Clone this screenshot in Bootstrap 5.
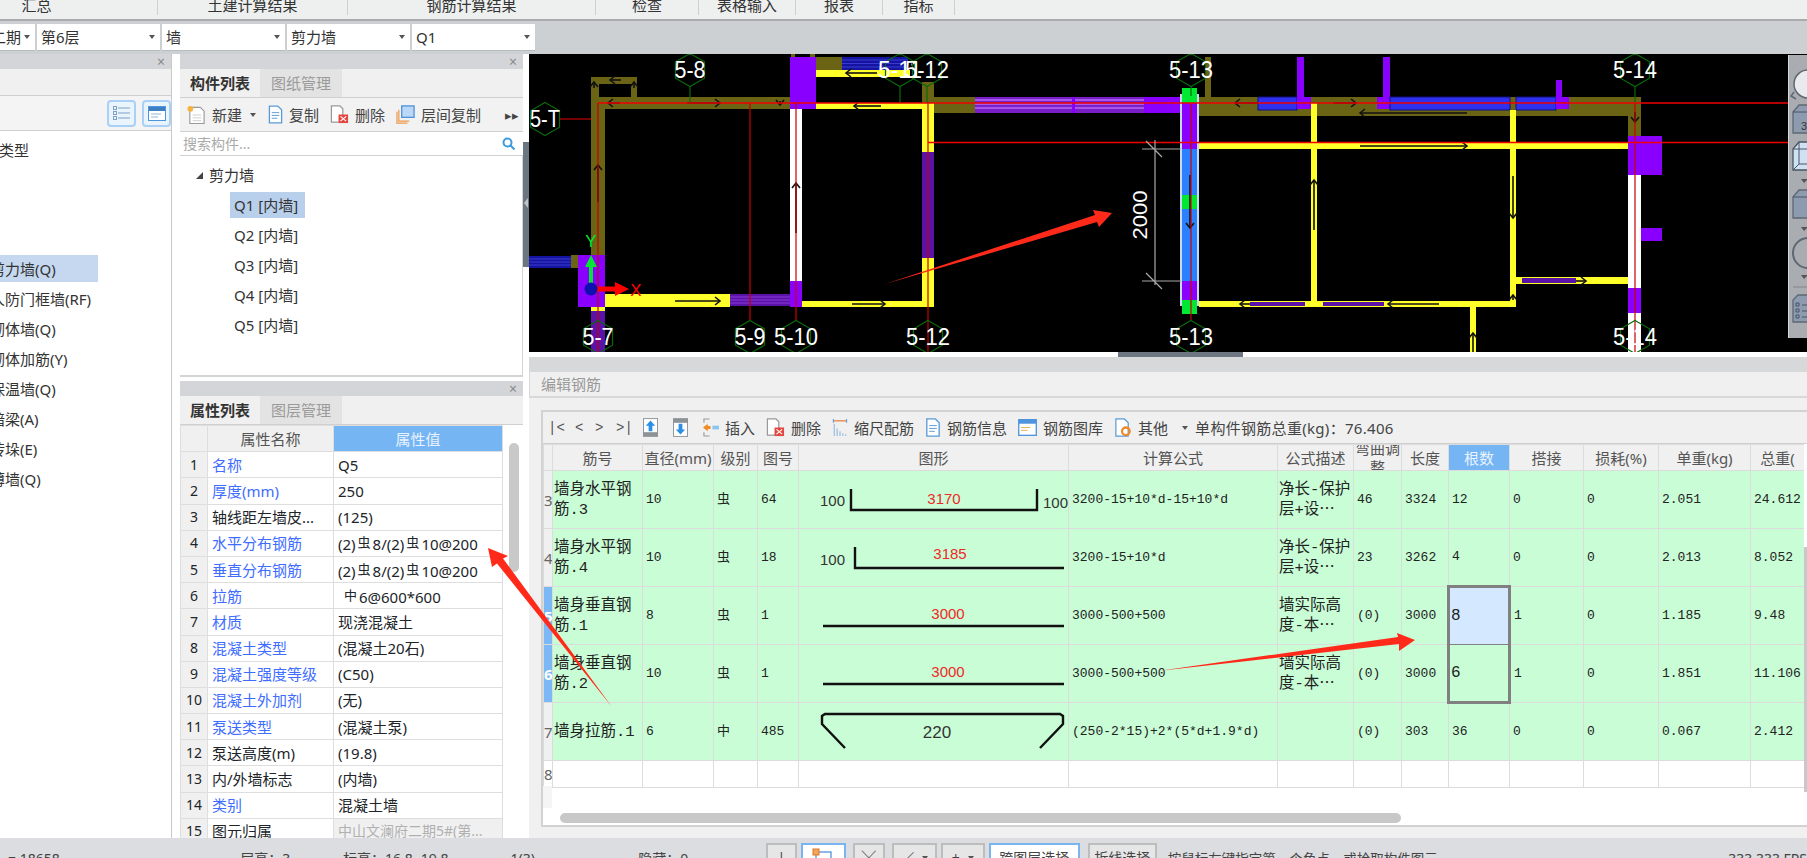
<!DOCTYPE html>
<html lang="zh-CN">
<head>
  <meta charset="UTF-8" />
  <meta name="viewport" content="width=device-width, initial-scale=1.0"/>
  <title>编辑钢筋</title>
  <link href="https://cdn.jsdelivr.net/npm/bootstrap@5.3.0/dist/css/bootstrap.min.css" rel="stylesheet"/>
  <style>
    html, body { height: 858px; overflow: hidden; }
    body {
      position: relative;
      width: 1807px;
      font: 15px/20px "Noto Sans", "Noto Sans CJK SC", sans-serif;
      color: #333;
      background: #dcdde0;
    }

    /* top strip */
    .ribbon {
      display: grid;
      grid-template-columns: 158px 190px 248px 103px 97px 87px 72px 1fr;
      height: 21px;
      background: #eef0f0;
      border-bottom: 2px solid #a9acaf;
      overflow: hidden;
      line-height: 11px;
      text-align: center;
    }
    .ribbon > div { border-right: 1px solid #ccd0d2; height: 15px; }
    .ribbon > div:first-child { padding-right: 84px; }
    .ribbon > div:last-child { border: 0; }

    .combos { display: flex; gap: 2px; height: 33px; padding: 3px 0 3px; background: #cdd0d3; }
    .combo {
      display: flex; align-items: center; justify-content: space-between; flex: none;
      width: 123px; height: 27px; padding: 0 5px 0 4px; background: #fff; border-bottom: 1px solid #b9bcbf;
      white-space: nowrap;
    }
    .combo::after, .drop-mark {
      content: ""; display: inline-block; flex: none;
      border-left: 3.5px solid transparent; border-right: 3.5px solid transparent; border-top: 4px solid #555;
    }
    .combo-first { width: 35px; overflow: hidden; padding-left: 0; justify-content: flex-end; gap: 3px; }

    .workspace { display: flex; height: 784px; }
    .col-types { width: 180px; background: #fff; flex: none; overflow: hidden; }
    .col-mid { width: 343px; flex: none; display: flex; flex-direction: column; background: #fff; }
    .col-strip { width: 6px; flex: none; background: #fff; padding-top: 88px; }
    .strip-handle { height: 125px; background: #6b7682; position: relative; }
    .strip-handle::after {
      content: ""; position: absolute; left: 1px; top: 56px;
      border-right: 4px solid #bfc4c9; border-top: 5px solid transparent; border-bottom: 5px solid transparent;
    }
    .col-main { flex: 1; min-width: 0; display: flex; flex-direction: column; background: #f0f0f0; }

    .pane-head {
      height: 15px; background: #d3d5d9; text-align: right;
      padding-right: 6px; font-size: 14px; line-height: 15px; color: #8a8a8a;
    }
    .types-wrap { width: 172px; height: 100%; border-right: 1px solid #c9c9c9; }
    .types-strip { height: 27px; background: #f0f0f0; border-bottom: 1px solid #cfcfcf; }
    .types-bar { height: 35px; display: flex; justify-content: flex-end; align-items: center; gap: 6px; border-bottom: 1px solid #cfcfcf; background: #f4f4f4; }
    .view-btn { width: 29px; height: 27px; padding: 0; border: 2px solid #a9d1f7; border-radius: 4px; background: #eaf4fd; display: flex; align-items: center; justify-content: center; }
    .type-item { height: 30px; line-height: 30px; margin-left: -10px; white-space: nowrap; }
    .type-on { background: #c5d8f0; width: 108px; height: 27px; margin-bottom: 2px; line-height: 28px; }
    .type-group { margin: 4px 0 90px -31px; height: 30px; line-height: 30px; white-space: nowrap; }

    .tabs-row { display: flex; height: 29px; background: #f0f0f0; border-bottom: 1px solid #d0d0d0; }
    .pane-tab { width: 80px; height: 28px; line-height: 28px; text-align: center; font-weight: 700; color: #333; }
    .pane-tab-off { width: 82px; background: #e3e3e3; color: #9a9a9a; font-weight: 400; }

    .tools { display: flex; align-items: center; height: 34px; background: #f2f2f2; border-bottom: 1px solid #d0d0d0; padding-left: 7px; color: #444; white-space: nowrap; }
    .tool { display: flex; align-items: center; gap: 6px; }
    .tool-gap { margin-left: 11px; }
    .search-row { display: flex; justify-content: space-between; align-items: center; height: 24px; padding: 0 8px 0 3px; border-bottom: 1px solid #d0d0d0; color: #aaa; font-size: 14px; }
    .tree-box { height: 221px; border-bottom: 2px solid #d4d4d4; border-right: 1px solid #d4d4d4; padding: 8px 0 0 16px; color: #333; }
    .tree-head { display: flex; align-items: center; gap: 6px; height: 22px; }
    .tree-head i { display: block; border-left: 7px solid transparent; border-bottom: 7px solid #444; }
    .tree-leaf { height: 30px; line-height: 26px; margin-left: 34px; padding: 0 4px; width: 75px; white-space: nowrap; }
    .tree-on { background: #b9d0ec; height: 26px; margin-top: 6px; margin-bottom: 4px; }

    .pane-props { flex: 1; min-height: 0; overflow: hidden; background: #fff; margin-top: 4px; position: relative; }
    .props-table { width: 322px; table-layout: fixed; margin: 0; border-collapse: collapse; vertical-align: middle; --bs-table-bg: transparent; }
    .props-table thead { vertical-align: middle; }
    .props-table td, .props-table th { height: 26.2px; padding: 0 4px; border: 1px solid #dedede; line-height: 20px; font-weight: 400; white-space: nowrap; overflow: hidden; vertical-align: middle; }
    .props-table th { background: #f0f0f0; text-align: center; color: #555; }
    .props-table .prop-head { background: #76b5f4; color: #e8f3ff; }
    .props-table .row-no { background: #f0f0f0; text-align: center; font-size: 14px; }
    .blue-key { color: #3e6dff; }
    .rb { font-size: 13px; vertical-align: 3px; padding: 0 2px; }
    .muted-val { background: #f0f0f0 !important; color: #b0b0b0; font-size: 14px; }
    .props-thumb { position: absolute; left: 329px; top: 62px; width: 10px; height: 129px; border-radius: 5px; background: #c9c9c9; }

    .cad { display: block; flex: none; }
    .cad text { font-family: "Liberation Sans", sans-serif; fill: #fff; }
    .c-ol { fill: #6b6414; } .c-ye { fill: #ffff2a; } .c-pu { fill: #8a00ff; } .c-dp { fill: #5a12a8; }
    .c-bl { fill: #2f2ff0; } .c-nv { fill: #1414a0; } .c-wh { fill: #fff; } .c-gr { fill: #00e832; } .c-sk { fill: #2a80ff; } .c-lp { fill: #7a1ec8; }
    .red-h { stroke: #f00000; stroke-width: 1.4; }
    .red-v { stroke: #c80000; stroke-width: 1.2; }
    .grn-v { stroke: #0a6a0a; stroke-width: 1.2; }
    .wall-a { stroke: #111; stroke-width: 1.6; fill: none; marker-end: url(#tip); }
    .pal-box { fill: #8c9bb0; stroke: #5f6872; stroke-width: 1.3; }
    .pal-line { fill: none; stroke: #4a5560; }
    .pal-tri { fill: #555; }

    .cad-scroll { height: 5px; flex: none; background: #fff; padding-left: 589px; }
    .cad-scroll div { width: 125px; height: 5px; background: #6e7781; }
    .gap-gray { height: 15px; flex: none; background: #d7d8da; }
    .edit-head { height: 26px; flex: none; line-height: 25px; padding-left: 11px; color: #999; background: #f0f0f0; border-bottom: 2px solid #d8d8d8; border-left: 1px solid #d8d8d8; }
    .edit-box { flex: none; height: 417px; margin: 12px 0 11px 12px; background: #fff; border: 1px solid #d2d2d2; border-width: 2px 0 2px 2px; display: flex; flex-direction: column; position: relative; }
    .edit-tools { display: flex; align-items: center; height: 32px; flex: none; padding-left: 5px; background: #f0f0f0; border-bottom: 1px solid #d0d0d0; color: #444; white-space: nowrap; }
    .edit-tools .tool { margin-right: 11px; }
    .edit-tools .tool-end { margin-right: 7px; }
    .total-text { letter-spacing: .3px; }
    .nav-mark { font-family: "Liberation Mono", monospace; color: #555; font-size: 14px; width: 21px; }
    .nav-first { width: 27px; }
    .nav-second { width: 20px; }
    .nav-last { width: 27px; }
    .steel-wrap { flex: 1; min-height: 0; overflow: hidden; width: 1261px; position: relative; }
    .steel-table { width: 1261px; table-layout: fixed; border-collapse: collapse; margin: 0; vertical-align: middle; --bs-table-bg: transparent; }
    .steel-table thead { vertical-align: middle; }
    .steel-table td, .steel-table th { border: 1px solid #dcdcdc; padding: 0 3px; overflow: hidden; font-weight: 400; vertical-align: middle; }
    .steel-table th { height: 26px; background: #f0f0f0; text-align: center; color: #555; line-height: 20px; white-space: nowrap; }
    .steel-table .wrap-head { white-space: normal; padding: 0; line-height: 19px; }
    .wrap-head div { height: 25px; display: flex; align-items: center; overflow: hidden; }
    .steel-table .sel-head { background: #76b5f4; color: #e8f3ff; }
    .steel-table tbody tr { height: 57.5px; }
    .steel-table tbody td { background: #c9fdd6; font: 13px/22px "Liberation Mono", "Noto Sans CJK SC", monospace; color: #222; }
    .steel-table tbody td.row-n { background: #f0f0f0; color: #666; padding: 0; text-align: center; font: 15px/20px "Noto Sans", sans-serif; }
    .steel-table tbody td.row-n-on { background: #7db8f6; color: #fff; font-weight: 700; }
    .steel-table tbody td.txt-cell { font-size: 15.5px; line-height: 20px; padding-left: 1px; padding-right: 0; }
    .steel-table tbody td.fig-cell { padding: 0; }
    .steel-table tbody td.sel-top { background: #d4e8ff; border: 3px solid #808080; border-bottom-width: 1px; font-size: 16px; padding-left: 1px; }
    .steel-table tbody td.sel-bot { border: 3px solid #808080; border-top-width: 1px; font-size: 16px; padding-left: 1px; }
    .steel-table tbody tr.blank-row { height: 27px; }
    .steel-table tbody tr.blank-row td { background: #fff; }
    .fig { display: block; }
    .fig text { font: 15px "Liberation Sans Narrow", "Liberation Sans", sans-serif; fill: #333; }
    .fig .num-red { fill: #f02828; }
    .fig-line { fill: none; stroke: #111; stroke-width: 2.4; }
    .row-tail { position: absolute; left: 0; top: 374px; width: 9px; height: 22px; background: #f5f5f5; }
    .hbar { position: absolute; left: 17px; top: 401px; width: 841px; height: 10px; border-radius: 5px; background: #c8c8c8; }
    .vbar { position: absolute; right: 0; top: 135px; width: 3px; height: 245px; background: #c8c8c8; }

    .status {
      display: flex; height: 20px; background: #dcdde0; overflow: hidden; white-space: nowrap; font-size: 14px; color: #444;
    }
    .status > span { padding-top: 11px; }
    .st-0 { width: 241px; padding-left: 8px; }
    .st-1 { width: 103px; } .st-2 { width: 168px; } .st-3 { width: 128px; } .st-4 { width: 128px; }
    .st-btns { display: flex; gap: 4px; padding-top: 5px; }
    .st-btn {
      height: 28px; padding: 3px 0 0; border: 2px solid #bdbdbd; border-radius: 0; background: #e6e6e6; color: #444;
      font-size: 14px; line-height: 20px; text-align: center; display: flex; justify-content: center; gap: 8px; white-space: nowrap;
    }
    .st-on { border-color: #7ab5f2; background: #fff; }
    .st-far { margin-left: 3px; }
    .st-msg { padding-left: 11px; width: 573px; font-size: 13.5px; }
  </style>
</head>
<body>

  <svg width="0" height="0" class="d-block position-absolute">
    <defs>
      <symbol id="i-page" viewBox="0 0 16 20"><path d="M1.5 1h9l4 4v14h-13z" fill="#fff" stroke="#5b9bd5" stroke-width="1.4"/><path d="M4 8h8M4 11h8M4 14h6" stroke="#5b9bd5"/></symbol>
      <symbol id="i-del" viewBox="0 0 20 20"><path d="M1.5 1h9l3 3v14h-12z" fill="#fff" stroke="#999" stroke-width="1.3"/><rect x="9" y="10" width="10" height="9" fill="#e4453f"/><path d="M11 12l6 5M17 12l-6 5" stroke="#fff" stroke-width="1.2"/></symbol>
      <symbol id="i-new" viewBox="0 0 20 20"><path d="M3 2h11l4 4v13H3z" fill="#fff" stroke="#999" stroke-width="1.2"/><path d="M6 10h9M6 13h9M6 16h9" stroke="#ccc"/><circle cx="3.5" cy="3.5" r="3" fill="#f7b23b"/></symbol>
      <symbol id="i-layers" viewBox="0 0 20 20"><path d="M1 7v12h11M3 5v12h11" fill="none" stroke="#ee9a4d" stroke-width="1.3"/><rect x="6" y="1" width="13" height="12" fill="#bcd8f6" stroke="#4f94dc" stroke-width="1.4"/></symbol>
      <symbol id="i-up" viewBox="0 0 16 20"><rect width="16" height="20" fill="#8d9297"/><rect x="1" y="1" width="14" height="14" fill="#fff"/><path d="M8 2.5l5 5.5h-3v6H6V8H3z" fill="#2b8fe6"/></symbol>
      <symbol id="i-down" viewBox="0 0 16 20"><rect width="16" height="20" fill="#8d9297"/><rect x="1" y="5" width="14" height="14" fill="#fff"/><path d="M8 17.5l5-5.5h-3V6H6v6H3z" fill="#2b8fe6"/></symbol>
      <symbol id="i-ins" viewBox="0 0 17 20"><path d="M7 1H1v4M7 19H1v-4" fill="none" stroke="#999" stroke-width="1.2"/><path d="M0 10l5-4v2.500h3v3H5V14z" fill="#f08a24"/><rect x="10" y="8" width="7" height="4" fill="#8cc4f2"/></symbol>
      <symbol id="i-scale" viewBox="0 0 16 20"><path d="M1 3h14" stroke="#e8762c" stroke-width="1.2"/><path d="M1 1v4M15 1v4" stroke="#4f94dc"/><path d="M2 19V6M5 19v-8M8 19v-5M11 19v-3M14 19v-2" stroke="#9bbfe0" stroke-width="1.3"/></symbol>
      <symbol id="i-lib" viewBox="0 0 20 18"><rect x=".7" y=".7" width="18.6" height="16.6" fill="#fff" stroke="#4f94dc" stroke-width="1.4"/><rect x="1" y="1" width="18" height="4" fill="#4f94dc"/><path d="M3 9h10M3 12h7" stroke="#e3b04b"/></symbol>
      <symbol id="i-other" viewBox="0 0 18 20"><path d="M1.5 1h9l4 4v14h-13z" fill="#fff" stroke="#5b9bd5" stroke-width="1.3"/><circle cx="12" cy="14" r="4" fill="none" stroke="#ee8a2a" stroke-width="2.4"/></symbol>
    </defs>
  </svg>

  <div class="ribbon">
    <div>汇总</div><div>土建计算结果</div><div>钢筋计算结果</div><div>检查</div><div>表格输入</div><div>报表</div><div>指标</div><div></div>
  </div>

  <div class="combos">
    <div class="combo combo-first">二期</div>
    <div class="combo">第6层</div>
    <div class="combo">墙</div>
    <div class="combo">剪力墙</div>
    <div class="combo">Q1</div>
  </div>

  <div class="workspace">
    <!-- left: component types, the panel is cut by the window edge -->
    <div class="col-types">
      <div class="types-wrap">
        <div class="pane-head">×</div>
        <div class="types-strip"></div>
        <div class="types-bar">
          <button class="btn view-btn" type="button">
            <svg width="17" height="15" viewBox="0 0 17 15"><path d="M5 2h12M5 7h12M5 12h12" stroke="#7d9fc4"/><rect x=".5" y=".5" width="3" height="3" fill="none" stroke="#7d9fc4"/><rect x=".5" y="5.500" width="3" height="3" fill="none" stroke="#7d9fc4"/><rect x=".5" y="10.500" width="3" height="3" fill="none" stroke="#7d9fc4"/></svg>
          </button>
          <button class="btn view-btn" type="button">
            <svg width="18" height="15" viewBox="0 0 18 15"><rect x=".5" y=".5" width="17" height="14" fill="#fff" stroke="#4f94dc"/><rect x="1" y="1" width="16" height="4" fill="#3e7fc4"/><path d="M3 8h10M3 11h7" stroke="#8cb6e0"/></svg>
          </button>
        </div>
        <div class="type-group">构件类型</div>
        <div class="type-item type-on">剪力墙(Q)</div>
        <div class="type-item">人防门框墙(RF)</div>
        <div class="type-item">砌体墙(Q)</div>
        <div class="type-item">砌体加筋(Y)</div>
        <div class="type-item">保温墙(Q)</div>
        <div class="type-item">暗梁(A)</div>
        <div class="type-item">砖垛(E)</div>
        <div class="type-item">薄墙(Q)</div>
      </div>
    </div>

    <!-- middle: component list + properties -->
    <div class="col-mid">
      <div class="pane-head">×</div>
      <div class="tabs-row">
        <div class="pane-tab">构件列表</div>
        <div class="pane-tab pane-tab-off">图纸管理</div>
      </div>
      <div class="tools">
        <div class="tool"><svg width="19" height="20"><use href="#i-new"/></svg>新建</div>
        <span class="drop-mark ms-2 me-2"></span>
        <div class="tool ms-1"><svg width="15" height="19"><use href="#i-page"/></svg>复制</div>
        <div class="tool tool-gap"><svg width="19" height="19"><use href="#i-del"/></svg>删除</div>
        <div class="tool tool-gap"><svg width="19" height="19"><use href="#i-layers"/></svg>层间复制</div>
        <span class="ms-auto me-1 small">▸▸</span>
      </div>
      <div class="search-row">
        <span>搜索构件...</span>
        <svg width="13" height="13" viewBox="0 0 13 13"><circle cx="5.500" cy="5.500" r="4" fill="none" stroke="#3b9bdc" stroke-width="2"/><path d="M8.500 8.500l4 4" stroke="#3b9bdc" stroke-width="2"/></svg>
      </div>
      <div class="tree-box">
        <div class="tree-head"><i></i>剪力墙</div>
        <div class="tree-leaf tree-on">Q1 [内墙]</div>
        <div class="tree-leaf">Q2 [内墙]</div>
        <div class="tree-leaf">Q3 [内墙]</div>
        <div class="tree-leaf">Q4 [内墙]</div>
        <div class="tree-leaf">Q5 [内墙]</div>
      </div>

      <div class="pane-props">
        <div class="pane-head">×</div>
        <div class="tabs-row">
          <div class="pane-tab">属性列表</div>
          <div class="pane-tab pane-tab-off">图层管理</div>
        </div>
        <table class="table props-table">
          <colgroup><col style="width:27px"><col style="width:126px"><col style="width:169px"></colgroup>
          <thead><tr><th></th><th>属性名称</th><th class="prop-head">属性值</th></tr></thead>
          <tbody>
            <tr><td class="row-no">1</td><td class="blue-key">名称</td><td>Q5</td></tr>
            <tr><td class="row-no">2</td><td class="blue-key">厚度(mm)</td><td>250</td></tr>
            <tr><td class="row-no">3</td><td>轴线距左墙皮...</td><td>(125)</td></tr>
            <tr><td class="row-no">4</td><td class="blue-key">水平分布钢筋</td><td>(2)<span class="rb">虫</span>8/(2)<span class="rb">虫</span>10@200</td></tr>
            <tr><td class="row-no">5</td><td class="blue-key">垂直分布钢筋</td><td>(2)<span class="rb">虫</span>8/(2)<span class="rb">虫</span>10@200</td></tr>
            <tr><td class="row-no">6</td><td class="blue-key">拉筋</td><td>&nbsp;<span class="rb">中</span>6@600*600</td></tr>
            <tr><td class="row-no">7</td><td class="blue-key">材质</td><td>现浇混凝土</td></tr>
            <tr><td class="row-no">8</td><td class="blue-key">混凝土类型</td><td>(混凝土20石)</td></tr>
            <tr><td class="row-no">9</td><td class="blue-key">混凝土强度等级</td><td>(C50)</td></tr>
            <tr><td class="row-no">10</td><td class="blue-key">混凝土外加剂</td><td>(无)</td></tr>
            <tr><td class="row-no">11</td><td class="blue-key">泵送类型</td><td>(混凝土泵)</td></tr>
            <tr><td class="row-no">12</td><td>泵送高度(m)</td><td>(19.8)</td></tr>
            <tr><td class="row-no">13</td><td>内/外墙标志</td><td>(内墙)</td></tr>
            <tr><td class="row-no">14</td><td class="blue-key">类别</td><td>混凝土墙</td></tr>
            <tr><td class="row-no">15</td><td>图元归属</td><td class="muted-val">中山文澜府二期5#(第...</td></tr>
          </tbody>
        </table>
        <div class="props-thumb"></div>
      </div>
    </div>

    <div class="col-strip"><div class="strip-handle"></div></div>

    <!-- right: drawing on top, rebar editor below -->
    <div class="col-main">
      <svg class="cad" width="1278" height="298" viewBox="529 54 1278 298">
        <defs>
          <marker id="tip" markerWidth="8" markerHeight="10" refX="6" refY="5" orient="auto" markerUnits="userSpaceOnUse">
            <path d="M1 1l5 4-5 4" fill="none" stroke="#111" stroke-width="1.6"/>
          </marker>
          <polygon id="hex" points="0,-16.5 14.5,-8.2 14.5,8.2 0,16.5 -14.5,8.2 -14.5,-8.2" fill="none" stroke="#0a6a0a" stroke-width="1.2"/>
        </defs>
        <rect x="529" y="54" width="1278" height="298" fill="#000"/>

        <!-- olive walls, left room -->
        <path class="c-ol" d="M591 77h46v20h154v12H605v146h-14zM599 84v13h32V84z"/>
        <rect class="c-ol" x="791" y="54" width="4" height="3"/><rect class="c-ol" x="810" y="54" width="5" height="3"/>
        <rect class="c-pu" x="790" y="57" width="26" height="52"/>
        <rect class="c-ol" x="816" y="57" width="26" height="13"/>
        <rect class="c-nv" x="842" y="57" width="66" height="13"/>
        <path d="M842 60h66M842 63.500h66M842 67h66" stroke="#3a3ad0" stroke-width="1.2"/>
        <rect class="c-ye" x="816" y="70" width="94" height="7"/>
        <rect class="c-ye" x="816" y="103" width="118" height="6"/>
        <rect class="c-ye" x="922" y="103" width="12" height="49"/>
        <rect class="c-dp" x="922" y="152" width="12" height="106"/>
        <rect class="c-ye" x="922" y="258" width="12" height="49"/>
        <rect class="c-wh" x="790" y="109" width="12" height="172"/>
        <rect class="c-pu" x="790" y="281" width="12" height="26"/>
        <rect class="c-ye" x="802" y="301" width="132" height="6"/>
        <rect class="c-ye" x="605" y="294" width="125" height="13"/>
        <rect class="c-dp" x="730" y="294" width="60" height="12"/>
        <path d="M730 297h60M730 300h60M730 303h60" stroke="#8a3ad8"/>
        <rect class="c-pu" x="578" y="255" width="27" height="52"/>
        <rect class="c-ol" x="571" y="255" width="7" height="13"/>
        <rect class="c-nv" x="529" y="256" width="42" height="12"/>
        <path d="M529 259h42M529 262h42M529 265h42" stroke="#3a3ad0"/>
        <rect class="c-ye" x="591" y="307" width="14" height="4"/>
        <rect class="c-dp" x="591" y="311" width="14" height="41"/>

        <!-- top band -->
        <rect class="c-ol" x="922" y="82" width="12" height="21"/>
        <rect class="c-ol" x="934" y="97" width="41" height="16"/>
        <rect class="c-lp" x="975" y="97" width="169" height="16"/>
        <path d="M975 100h169M975 104h169M975 108h169" stroke="#b868f4" stroke-width="1.3"/>
        <rect class="c-pu" x="1072" y="97" width="3" height="16"/>
        <rect class="c-pu" x="1144" y="97" width="37" height="16"/>
        <rect class="c-ol" x="1205" y="57" width="6" height="40"/>
        <rect class="c-ol" x="1199" y="97" width="442" height="19"/>
        <rect class="c-ol" x="1628" y="116" width="13" height="20"/>
        <rect class="c-bl" x="1258" y="97" width="39" height="13" stroke="#12127a"/>
        <rect class="c-pu" x="1297" y="97" width="14" height="12"/><rect class="c-pu" x="1297" y="57" width="7" height="40"/>
        <rect class="c-pu" x="1377" y="97" width="13" height="12"/><rect class="c-pu" x="1383" y="57" width="7" height="40"/>
        <rect class="c-bl" x="1390" y="97" width="120" height="13" stroke="#12127a"/>
        <rect class="c-bl" x="1516" y="97" width="40" height="13" stroke="#12127a"/>
        <rect class="c-pu" x="1556" y="97" width="13" height="12"/><rect class="c-pu" x="1556" y="80" width="6" height="17"/>

        <!-- yellow walls, right room -->
        <rect class="c-ye" x="1199" y="142" width="429" height="7"/>
        <rect class="c-ye" x="1311" y="103" width="6" height="198"/>
        <rect class="c-ye" x="1510" y="110" width="6" height="197"/>
        <rect class="c-ye" x="1199" y="301" width="317" height="6"/>
        <rect class="c-dp" x="1250" y="302" width="55" height="4"/><rect class="c-dp" x="1323" y="302" width="61" height="4"/>
        <rect class="c-ye" x="1516" y="277" width="112" height="7"/>
        <rect class="c-dp" x="1522" y="278" width="54" height="5"/>
        <rect class="c-ye" x="1470" y="307" width="6" height="45"/>
        <rect class="c-pu" x="1628" y="136" width="34" height="39"/>
        <rect class="c-wh" x="1628" y="175" width="13" height="113"/>
        <rect class="c-pu" x="1641" y="228" width="21" height="13"/>
        <rect class="c-pu" x="1628" y="288" width="13" height="25"/>
        <rect class="c-wh" x="1628" y="313" width="13" height="39"/>

        <!-- selected wall -->
        <rect x="1180" y="94" width="19" height="212" fill="#c8d8f0"/>
        <rect class="c-pu" x="1182" y="103" width="15" height="46"/>
        <rect class="c-sk" x="1182" y="149" width="15" height="132"/>
        <rect class="c-pu" x="1182" y="281" width="15" height="19"/>
        <rect class="c-gr" x="1182" y="88" width="15" height="15"/>
        <rect class="c-gr" x="1182" y="195" width="15" height="14"/>
        <rect class="c-gr" x="1182" y="300" width="15" height="14"/>

        <!-- wall direction arrows -->
        <path class="wall-a" d="M621 80h-11"/><path class="wall-a" d="M594 88v-6"/><path class="wall-a" d="M634 88v-6"/>
        <path class="wall-a" d="M620 103h-12"/><path class="wall-a" d="M687 103h33"/><path class="wall-a" d="M780 101v4"/>
        <path class="wall-a" d="M877 73h-31"/><path class="wall-a" d="M881 106h-27"/>
        <path class="wall-a" d="M598 202v-37"/><path class="wall-a" d="M796 233v-50"/>
        <path class="wall-a" d="M675 301h45"/><path class="wall-a" d="M852 304h33"/>
        <path class="wall-a" d="M1258 103h-23"/><path class="wall-a" d="M1333 103h23"/>
        <path class="wall-a" d="M1467 113h-107"/><path class="wall-a" d="M1360 146h107"/>
        <path class="wall-a" d="M1190 175v53"/><path class="wall-a" d="M1314 230v-50"/>
        <path class="wall-a" d="M1513 176v42"/><path class="wall-a" d="M1635 112v10"/>
        <path class="wall-a" d="M1513 300v-5"/><path class="wall-a" d="M1250 304h-10"/>
        <path class="wall-a" d="M1439 304h-51"/><path class="wall-a" d="M1473 352v-19"/><path class="wall-a" d="M1576 281h10"/>

        <!-- axis lines -->
        <path class="grn-v" d="M690 86v17M900 86v17M927 86v17M1191 86v10M1635 86v17"/>
        <path class="red-v" d="M598 103v249M750 103v217M796 103v217M928 103v249M1191 103v217M1635 103v249"/>
        <path class="red-h" d="M598 103H1788M928 142.500H1788"/>
        <path class="red-v" d="M559 119h32"/>

        <!-- local axes -->
        <path d="M591 288v-22" stroke="#00e832" stroke-width="4"/><path d="M591 255l6 12h-12z" fill="#00e832"/>
        <path d="M595 289h22" stroke="#f00" stroke-width="5"/><path d="M629 289l-14 7v-14z" fill="#f00"/>
        <circle cx="591" cy="289" r="6.500" fill="#1010b0"/>
        <text x="591" y="247" text-anchor="middle" font-size="17" style="fill:#00e832">Y</text>
        <text x="636" y="296" text-anchor="middle" font-size="17" style="fill:#f00">X</text>

        <!-- dimension -->
        <path d="M1155 140v145M1142 149h39M1142 281h39M1146 141l16 16M1146 273l16 16" stroke="#a8a8a8" stroke-width="1.2" fill="none"/>
        <text transform="translate(1147 215) rotate(-90)" text-anchor="middle" font-size="21" textLength="49" lengthAdjust="spacingAndGlyphs">2000</text>

        <!-- axis bubbles -->
        <use href="#hex" x="545" y="119"/><text x="545" y="127" text-anchor="middle" font-size="23" textLength="30" lengthAdjust="spacingAndGlyphs">5-T</text>
        <use href="#hex" x="690" y="70"/><text x="690" y="78" text-anchor="middle" font-size="23" textLength="31" lengthAdjust="spacingAndGlyphs">5-8</text>
        <use href="#hex" x="900" y="70"/><text x="900" y="78" text-anchor="middle" font-size="23" textLength="44" lengthAdjust="spacingAndGlyphs">5-11</text>
        <use href="#hex" x="927" y="70"/><text x="927" y="78" text-anchor="middle" font-size="23" textLength="44" lengthAdjust="spacingAndGlyphs">5-12</text>
        <use href="#hex" x="1191" y="70"/><text x="1191" y="78" text-anchor="middle" font-size="23" textLength="44" lengthAdjust="spacingAndGlyphs">5-13</text>
        <use href="#hex" x="1635" y="70"/><text x="1635" y="78" text-anchor="middle" font-size="23" textLength="44" lengthAdjust="spacingAndGlyphs">5-14</text>
        <use href="#hex" x="598" y="337"/><text x="598" y="345" text-anchor="middle" font-size="23" textLength="31" lengthAdjust="spacingAndGlyphs">5-7</text>
        <use href="#hex" x="750" y="337"/><text x="750" y="345" text-anchor="middle" font-size="23" textLength="31" lengthAdjust="spacingAndGlyphs">5-9</text>
        <use href="#hex" x="796" y="337"/><text x="796" y="345" text-anchor="middle" font-size="23" textLength="44" lengthAdjust="spacingAndGlyphs">5-10</text>
        <use href="#hex" x="928" y="337"/><text x="928" y="345" text-anchor="middle" font-size="23" textLength="44" lengthAdjust="spacingAndGlyphs">5-12</text>
        <use href="#hex" x="1191" y="337"/><text x="1191" y="345" text-anchor="middle" font-size="23" textLength="44" lengthAdjust="spacingAndGlyphs">5-13</text>
        <use href="#hex" x="1635" y="337"/><text x="1635" y="345" text-anchor="middle" font-size="23" textLength="44" lengthAdjust="spacingAndGlyphs">5-14</text>

        <!-- view palette -->
        <rect x="1788" y="55" width="19" height="283" fill="#a9adb2"/>
        <rect x="1788" y="55" width="1" height="283" fill="#d5d7da"/>
        <circle cx="1808" cy="84" r="14" fill="#e8eaed" stroke="#5f6872" stroke-width="1.5"/>
        <path d="M1794 92l-3 4 5 3" fill="none" stroke="#5f6872" stroke-width="1.5"/>
        <path class="pal-box" d="M1793 112l6-7h9v28h-15z"/><path class="pal-line" d="M1793 112h15"/>
        <text x="1801" y="130" font-size="11" style="fill:#333">3</text>
        <path d="M1793 149l6-7h9v28h-15z" fill="#cfe1f5" stroke="#4a5560" stroke-width="1.3"/><path class="pal-line" d="M1793 149h15M1799 142v22l-6 6M1799 164h9"/>
        <path class="pal-tri" d="M1804 183l-3-4h7z"/>
        <path class="pal-box" d="M1793 197l6-7h9v28h-15z"/><path class="pal-line" d="M1793 197h15"/>
        <path class="pal-tri" d="M1804 231l-3-4h7z"/>
        <circle cx="1808" cy="253" r="15" fill="none" stroke="#5f6872" stroke-width="2"/>
        <path class="pal-tri" d="M1804 279l-3-4h7z"/>
        <path d="M1793 287h14" stroke="#83878c"/>
        <path class="pal-box" d="M1793 300l5-5h10v27h-15z"/>
        <path class="pal-line" d="M1796 303h3v3h-3zM1796 309h3v3h-3zM1796 315h3v3h-3zM1802 305h5M1802 311h5M1802 317h5"/>
      </svg>
      <div class="cad-scroll"><div></div></div>
      <div class="gap-gray"></div>
      <div class="edit-head">编辑钢筋</div>
      <div class="edit-box">
        <div class="edit-tools">
          <span class="nav-mark nav-first">|&lt;</span><span class="nav-mark nav-second">&lt;</span><span class="nav-mark">&gt;</span><span class="nav-mark nav-last">&gt;|</span>
          <div class="tool"><svg width="15" height="19"><use href="#i-up"/></svg></div>
          <div class="tool ms-1"><svg width="15" height="19"><use href="#i-down"/></svg></div>
          <div class="tool ms-1"><svg width="16" height="19"><use href="#i-ins"/></svg>插入</div>
          <div class="tool"><svg width="19" height="19"><use href="#i-del"/></svg>删除</div>
          <div class="tool"><svg width="16" height="19"><use href="#i-scale"/></svg>缩尺配筋</div>
          <div class="tool"><svg width="16" height="19"><use href="#i-page"/></svg>钢筋信息</div>
          <div class="tool"><svg width="19" height="17"><use href="#i-lib"/></svg>钢筋图库</div>
          <div class="tool tool-end"><svg width="18" height="19"><use href="#i-other"/></svg>其他<span class="drop-mark ms-2"></span></div>
          <div class="total-text">单构件钢筋总重(kg)：76.406</div>
        </div>
        <div class="steel-wrap">
          <table class="table steel-table">
            <colgroup>
              <col style="width:9px"><col style="width:90px"><col style="width:71px"><col style="width:44px"><col style="width:41px"><col style="width:270px">
              <col style="width:209px"><col style="width:76px"><col style="width:48px"><col style="width:47px"><col style="width:61px"><col style="width:74px">
              <col style="width:75px"><col style="width:92px"><col style="width:54px">
            </colgroup>
            <thead>
              <tr>
                <th></th><th>筋号</th><th class="px-0">直径(mm)</th><th>级别</th><th>图号</th><th>图形</th><th>计算公式</th><th>公式描述</th>
                <th class="wrap-head"><div>弯曲调整</div></th><th>长度</th><th class="sel-head">根数</th><th>搭接</th><th class="px-0">损耗(%)</th><th>单重(kg)</th><th class="px-0 text-nowrap">总重(</th>
              </tr>
            </thead>
            <tbody>
              <tr>
                <td class="row-n">3</td><td class="txt-cell">墙身水平钢筋.3</td><td>10</td><td>虫</td><td>64</td>
                <td class="fig-cell">
                  <svg class="fig" width="270" height="57" viewBox="0 0 270 57">
                    <text x="21" y="35">100</text><path class="fig-line" d="M52 18v21h186V18"/>
                    <text class="num-red" x="145" y="33" text-anchor="middle">3170</text><text x="244" y="37">100</text>
                  </svg>
                </td>
                <td>3200-15+10*d-15+10*d</td><td class="txt-cell">净长-保护层+设⋯</td><td>46</td><td>3324</td><td>12</td><td>0</td><td>0</td><td>2.051</td><td>24.612</td>
              </tr>
              <tr>
                <td class="row-n">4</td><td class="txt-cell">墙身水平钢筋.4</td><td>10</td><td>虫</td><td>18</td>
                <td class="fig-cell">
                  <svg class="fig" width="270" height="57" viewBox="0 0 270 57">
                    <text x="21" y="36">100</text><path class="fig-line" d="M56 18v21h209"/>
                    <text class="num-red" x="151" y="30" text-anchor="middle">3185</text>
                  </svg>
                </td>
                <td>3200-15+10*d</td><td class="txt-cell">净长-保护层+设⋯</td><td>23</td><td>3262</td><td>4</td><td>0</td><td>0</td><td>2.013</td><td>8.052</td>
              </tr>
              <tr>
                <td class="row-n row-n-on">5</td><td class="txt-cell">墙身垂直钢筋.1</td><td>8</td><td>虫</td><td>1</td>
                <td class="fig-cell">
                  <svg class="fig" width="270" height="57" viewBox="0 0 270 57">
                    <path class="fig-line" d="M24 39h241"/><text class="num-red" x="149" y="32" text-anchor="middle">3000</text>
                  </svg>
                </td>
                <td>3000-500+500</td><td class="txt-cell">墙实际高度-本⋯</td><td>(0)</td><td>3000</td><td class="sel-top">8</td><td>1</td><td>0</td><td>1.185</td><td>9.48</td>
              </tr>
              <tr>
                <td class="row-n row-n-on">6</td><td class="txt-cell">墙身垂直钢筋.2</td><td>10</td><td>虫</td><td>1</td>
                <td class="fig-cell">
                  <svg class="fig" width="270" height="57" viewBox="0 0 270 57">
                    <path class="fig-line" d="M24 39h241"/><text class="num-red" x="149" y="32" text-anchor="middle">3000</text>
                  </svg>
                </td>
                <td>3000-500+500</td><td class="txt-cell">墙实际高度-本⋯</td><td>(0)</td><td>3000</td><td class="sel-bot">6</td><td>1</td><td>0</td><td>1.851</td><td>11.106</td>
              </tr>
              <tr>
                <td class="row-n">7</td><td class="txt-cell">墙身拉筋.1</td><td>6</td><td>中</td><td>485</td>
                <td class="fig-cell">
                  <svg class="fig" width="270" height="57" viewBox="0 0 270 57">
                    <path class="fig-line" d="M46 45L23 21v-8l3-2h235l3 2v8L241 45"/>
                    <text x="138" y="35" text-anchor="middle" style="font-size:17px">220</text>
                  </svg>
                </td>
                <td>(250-2*15)+2*(5*d+1.9*d)</td><td></td><td>(0)</td><td>303</td><td>36</td><td>0</td><td>0</td><td>0.067</td><td>2.412</td>
              </tr>
              <tr class="blank-row">
                <td class="row-n">8</td><td></td><td></td><td></td><td></td><td></td><td></td><td></td><td></td><td></td><td></td><td></td><td></td><td></td><td></td>
              </tr>
            </tbody>
          </table>
        </div>
        <div class="row-tail"></div>
        <div class="hbar"></div>
        <div class="vbar"></div>
      </div>
    </div>
  </div>

  <div class="status">
    <span class="st-0">= 18658</span>
    <span class="st-1">层高：3</span>
    <span class="st-2">标高：16.8~19.8</span>
    <span class="st-3">1(3)</span>
    <span class="st-4">隐藏：0</span>
    <div class="st-btns">
      <button class="btn st-btn" type="button" style="width:31px">|</button>
      <button class="btn st-btn st-on" type="button" style="width:45px">
        <svg width="24" height="22" viewBox="0 0 24 22"><rect x="5" y="4" width="15" height="14" fill="none" stroke="#4f94dc" stroke-width="1.3"/><rect x="2" y="1" width="6" height="6" fill="#f3a35a" stroke="#e07a20"/></svg>
      </button>
      <button class="btn st-btn st-far" type="button" style="width:32px">╳</button>
      <button class="btn st-btn st-far" type="button" style="width:45px">∕<span class="drop-mark mt-2"></span></button>
      <button class="btn st-btn" type="button" style="width:44px">+<span class="drop-mark mt-2"></span></button>
      <button class="btn st-btn st-on" type="button" style="width:91px">跨图层选择</button>
      <button class="btn st-btn ms-1" type="button" style="width:69px">折线选择</button>
    </div>
    <span class="st-msg">按鼠标左键指定第一个角点，或拾取构件图元</span>
    <span>333.333 FPS</span>
  </div>

  <!-- red markup arrows drawn over the screenshot -->
  <svg class="position-absolute top-0 start-0 pe-none" width="1807" height="858" viewBox="0 0 1807 858">
    <path d="M885 284L1095 215L1093 210L1112 213L1099 227L1097 222Z" fill="#ff2a1a"/>
    <path d="M1158 671L1398 637L1397 633L1415 640L1399 651L1399 644Z" fill="#ff2a1a"/>
    <path d="M612 707L503 558.500L508 556L488 548L492 567L497 563.500Z" fill="#ff2a1a"/>
  </svg>

  <script src="https://cdn.jsdelivr.net/npm/bootstrap@5.3.0/dist/js/bootstrap.bundle.min.js"></script>
</body>
</html>
